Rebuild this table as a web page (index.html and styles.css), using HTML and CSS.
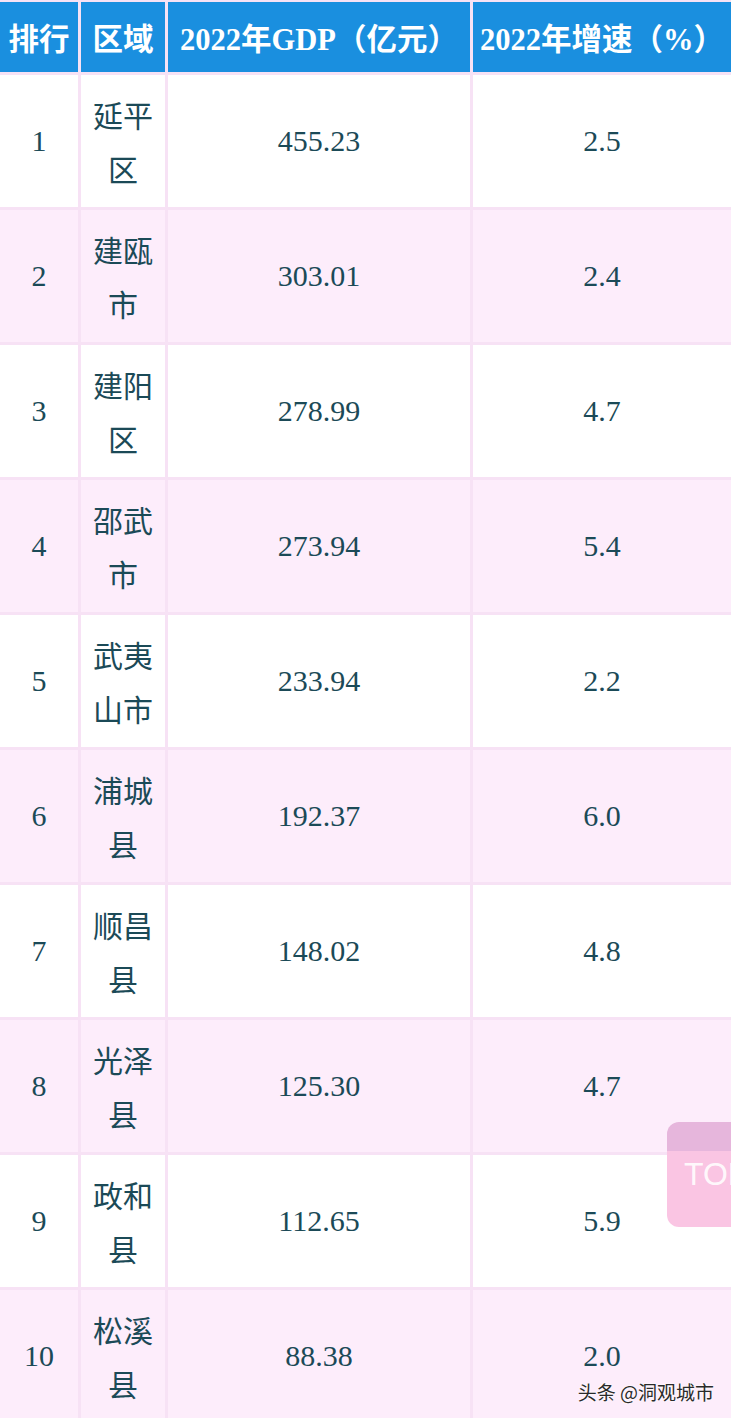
FILE: index.html
```html
<!DOCTYPE html>
<html lang="zh">
<head>
<meta charset="utf-8">
<link rel="stylesheet" href="styles.css">
</head>
<body>
<div class="page">
  <div class="table">
    <div class="row head">
      <div class="cell">排行</div>
      <div class="cell">区域</div>
      <div class="cell">2022年GDP（亿元）</div>
      <div class="cell">2022年增速（%）</div>
    </div>
    <div class="row"><div class="cell num">1</div><div class="cell name">延平区</div><div class="cell num">455.23</div><div class="cell num">2.5</div></div>
    <div class="row alt"><div class="cell num">2</div><div class="cell name">建瓯市</div><div class="cell num">303.01</div><div class="cell num">2.4</div></div>
    <div class="row"><div class="cell num">3</div><div class="cell name">建阳区</div><div class="cell num">278.99</div><div class="cell num">4.7</div></div>
    <div class="row alt"><div class="cell num">4</div><div class="cell name">邵武市</div><div class="cell num">273.94</div><div class="cell num">5.4</div></div>
    <div class="row"><div class="cell num">5</div><div class="cell name">武夷山市</div><div class="cell num">233.94</div><div class="cell num">2.2</div></div>
    <div class="row alt"><div class="cell num">6</div><div class="cell name">浦城县</div><div class="cell num">192.37</div><div class="cell num">6.0</div></div>
    <div class="row"><div class="cell num">7</div><div class="cell name">顺昌县</div><div class="cell num">148.02</div><div class="cell num">4.8</div></div>
    <div class="row alt"><div class="cell num">8</div><div class="cell name">光泽县</div><div class="cell num">125.30</div><div class="cell num">4.7</div></div>
    <div class="row"><div class="cell num">9</div><div class="cell name">政和县</div><div class="cell num">112.65</div><div class="cell num">5.9</div></div>
    <div class="row alt"><div class="cell num">10</div><div class="cell name">松溪县</div><div class="cell num">88.38</div><div class="cell num">2.0</div></div>
  </div>
  <div class="top-btn">TOP</div>
  <div class="watermark">头条 @洞观城市</div>
</div>
</body>
</html>
```

FILE: styles.css
```css
html, body {
  margin: 0;
  padding: 0;
  background: #ffffff;
}
.page {
  position: relative;
  width: 731px;
  height: 1418px;
  overflow: hidden;
}
.table {
  display: flex;
  flex-direction: column;
  gap: 3px;
  padding-top: 2px;
  background: #f7e2f5;
}
.row {
  display: grid;
  grid-template-columns: 78px 84px 302px 1fr;
  column-gap: 3px;
  height: 132px;
}
.row.head {
  height: 70px;
}
.cell {
  display: flex;
  align-items: center;
  justify-content: center;
  text-align: center;
  background: #ffffff;
  color: #1b4a57;
}
.row.alt .cell {
  background: #fdedfb;
}
.head .cell {
  background: #1a8fdf;
  color: #ffffff;
  font-family: "Liberation Serif", "Noto Sans CJK SC", serif;
  font-weight: bold;
  font-size: 30.5px;
  white-space: nowrap;
}
.num {
  font-family: "Liberation Serif", serif;
  font-size: 30px;
}
.name {
  font-family: "Noto Sans CJK SC", sans-serif;
  font-size: 30px;
  line-height: 54px;
  padding: 0 10px;
}
.top-btn {
  position: absolute;
  left: 667px;
  top: 1122px;
  width: 90px;
  height: 105px;
  border-radius: 12px;
  background: linear-gradient(to bottom, #e6b6dc 0, #e6b6dc 29px, #fac5e3 29px, #fac5e3 100%);
  color: rgba(255, 255, 255, 0.9);
  font-family: "Liberation Sans", sans-serif;
  font-size: 32px;
  line-height: 105px;
  padding-left: 17px;
  box-sizing: border-box;
}
.watermark {
  position: absolute;
  right: 17px;
  top: 1378px;
  font-family: "Noto Sans CJK SC", sans-serif;
  font-size: 19px;
  color: #2a2a2a;
  text-shadow: 0 0 2px #ffffff, 0 0 2px #ffffff;
}
```
